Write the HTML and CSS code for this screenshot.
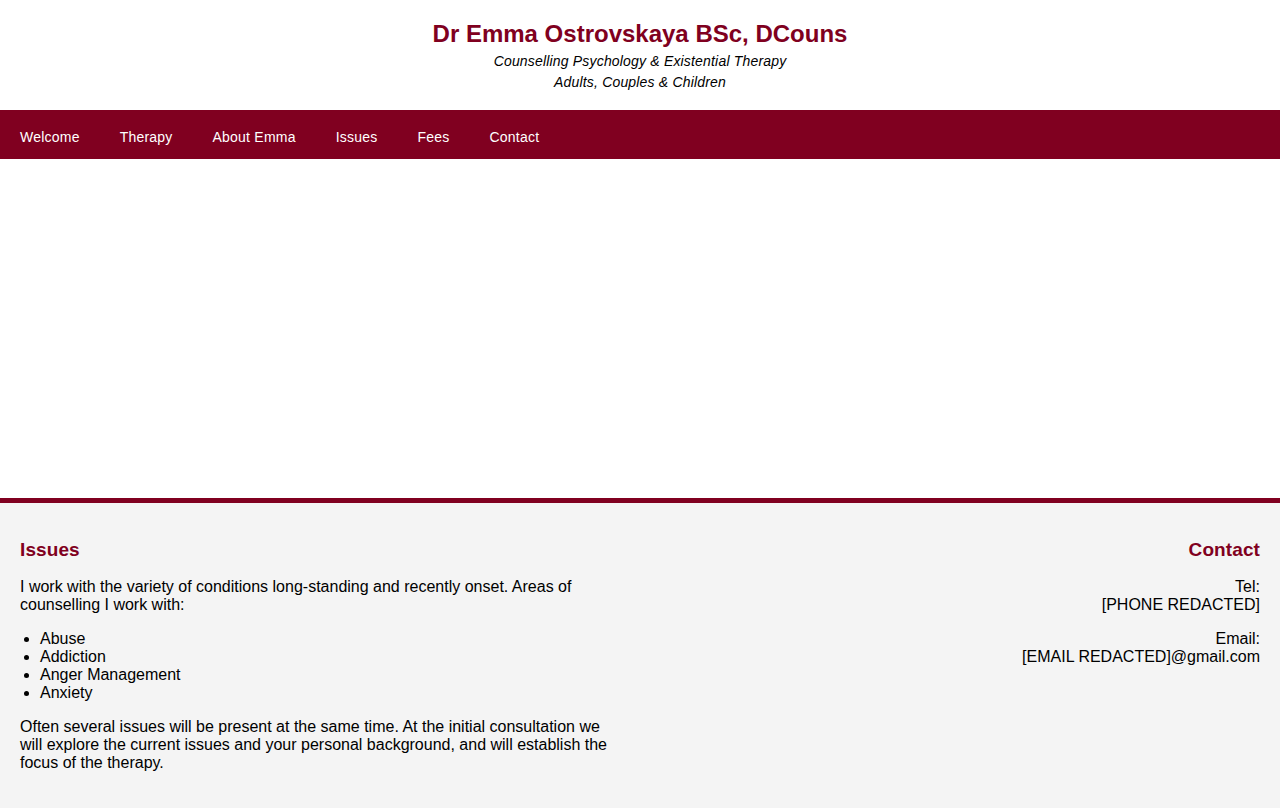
FILE: index.html
```html
<!DOCTYPE html>
<html lang="en">
<head>
<meta charset="utf-8">
<title>Dr Emma Ostrovskaya</title>
<link rel="stylesheet" href="styles.css">
</head>
<body>
<header class="site-header">
  <h1 class="site-title">Dr Emma Ostrovskaya BSc, DCouns</h1>
  <p class="tagline">Counselling Psychology &amp; Existential Therapy</p>
  <p class="tagline">Adults, Couples &amp; Children</p>
</header>
<nav class="main-nav">
  <a href="#">Welcome</a>
  <a href="#">Therapy</a>
  <a href="#">About Emma</a>
  <a href="#">Issues</a>
  <a href="#">Fees</a>
  <a href="#">Contact</a>
</nav>
<div class="hero"></div>
<footer class="info">
  <section class="col col-left">
    <h3 class="col-title">Issues</h3>
    <p>I work with the variety of conditions long-standing and recently onset. Areas of counselling I work with:</p>
    <ul>
      <li>Abuse</li>
      <li>Addiction</li>
      <li>Anger Management</li>
      <li>Anxiety</li>
    </ul>
    <p>Often several issues will be present at the same time. At the initial consultation we will explore the current issues and your personal background, and will establish the focus of the therapy.</p>
  </section>
  <section class="col col-right">
    <h3 class="col-title">Contact</h3>
    <p>Tel:<br>[PHONE REDACTED]</p>
    <p>Email:<br>[EMAIL REDACTED]@gmail.com</p>
  </section>
</footer>
</body>
</html>
```
FILE: styles.css
```css
* { box-sizing: border-box; }
html, body { margin: 0; padding: 0; }
body {
  font-family: "Liberation Sans", Arial, sans-serif;
  color: #000;
  background: #fff;
  height: 808px;
  overflow: hidden;
}
.site-header {
  text-align: center;
  padding: 20px 0 16px;
  height: 110px;
}
.site-title {
  margin: 0;
  font-size: 24px;
  line-height: 28px;
  font-weight: bold;
  color: #800020;
}
.tagline {
  margin: 0;
  font-size: 14px;
  line-height: 21px;
  font-style: italic;
  letter-spacing: 0.18px;
}
.site-title + .tagline { margin-top: 3px; }
.main-nav {
  background: #800020;
  display: flex;
  height: 49px;
}
.main-nav a {
  color: #fff;
  text-decoration: none;
  font-size: 14px;
  line-height: 17px;
  letter-spacing: 0.22px;
  padding: 19px 20px 13px;
}
.hero {
  height: 344px;
  background: #fff;
  border-bottom: 5px solid #800020;
}
.info {
  background: #f4f4f4;
  display: flex;
  justify-content: space-between;
  padding: 20px;
  height: 305px;
  font-size: 16px;
  line-height: 18px;
}
.col { width: 600px; }
.col-right { text-align: right; }
.col-title {
  margin: 16px 0 18px;
  font-size: 19px;
  line-height: 21px;
  font-weight: bold;
  color: #800020;
  letter-spacing: 0.1px;
}
.info p { margin: 16px 0; }
.col-title + p { margin-top: 0; }
.info ul { margin: 16px 0; padding-left: 20px; }
```
